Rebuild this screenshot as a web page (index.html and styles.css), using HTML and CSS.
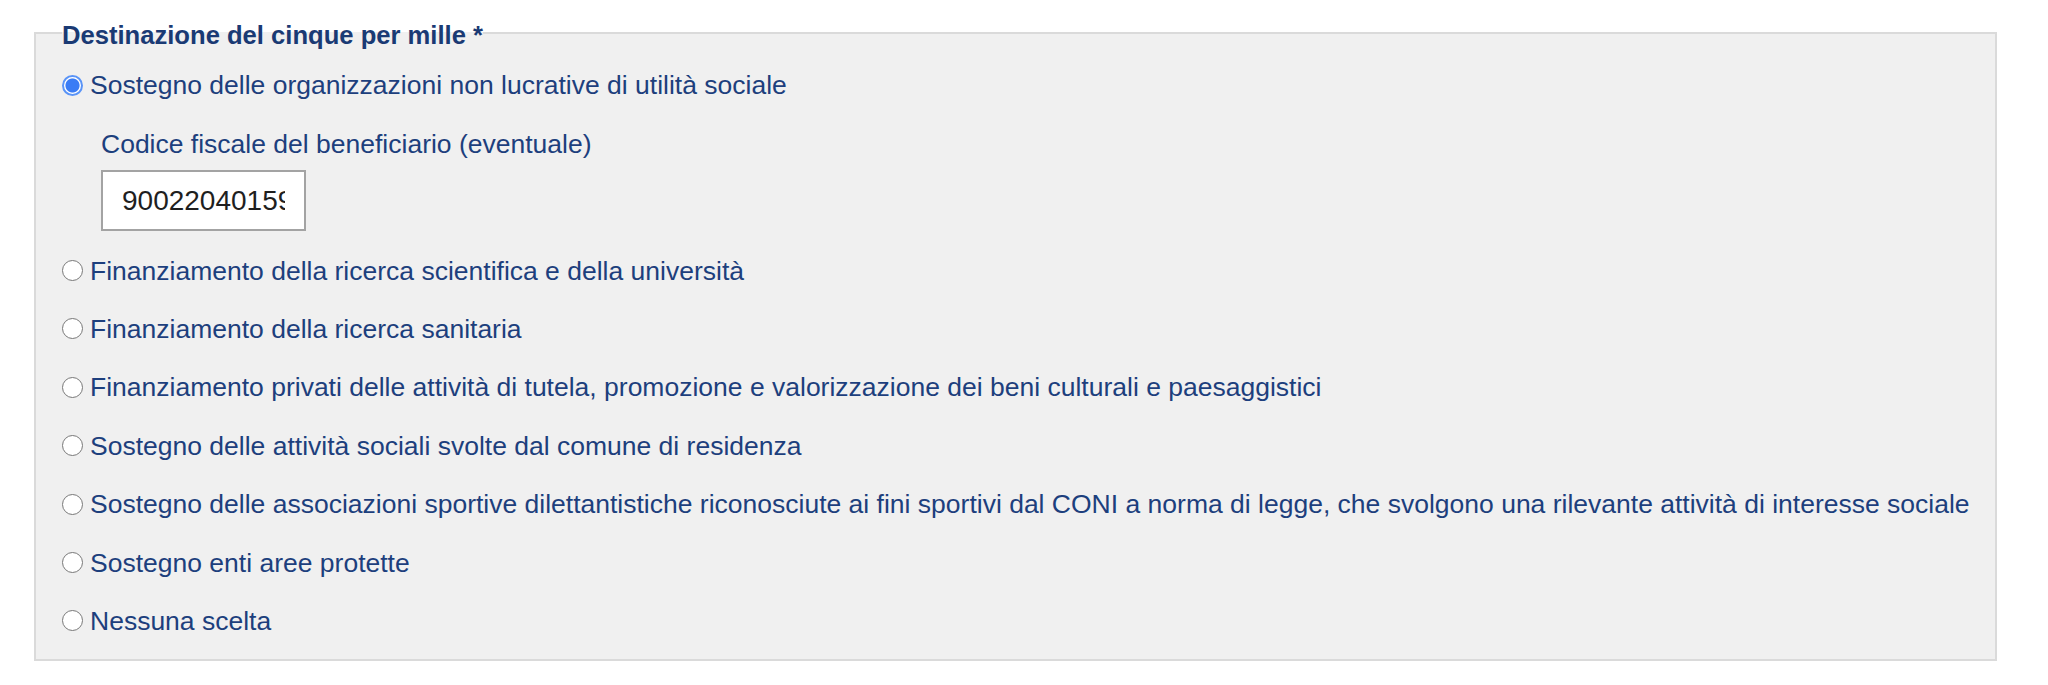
FILE: index.html
```html
<!DOCTYPE html>
<html lang="it">
<head>
<meta charset="utf-8">
<title>Destinazione del cinque per mille</title>
<link rel="stylesheet" href="styles.css">
</head>
<body>
<form class="page">
  <fieldset class="group">
    <legend class="group-title">Destinazione del cinque per mille *</legend>
    <label class="option"><input class="radio" type="radio" name="dest" checked><span>Sostegno delle organizzazioni non lucrative di utilità sociale</span></label>
    <div class="sub">
      <label class="sub-label" for="cf">Codice fiscale del beneficiario (eventuale)</label>
      <input class="text-input" id="cf" type="text" value="90022040159">
    </div>
    <label class="option"><input class="radio" type="radio" name="dest"><span>Finanziamento della ricerca scientifica e della università</span></label>
    <label class="option"><input class="radio" type="radio" name="dest"><span>Finanziamento della ricerca sanitaria</span></label>
    <label class="option"><input class="radio" type="radio" name="dest"><span>Finanziamento privati delle attività di tutela, promozione e valorizzazione dei beni culturali e paesaggistici</span></label>
    <label class="option"><input class="radio" type="radio" name="dest"><span>Sostegno delle attività sociali svolte dal comune di residenza</span></label>
    <label class="option"><input class="radio" type="radio" name="dest"><span>Sostegno delle associazioni sportive dilettantistiche riconosciute ai fini sportivi dal CONI a norma di legge, che svolgono una rilevante attività di interesse sociale</span></label>
    <label class="option"><input class="radio" type="radio" name="dest"><span>Sostegno enti aree protette</span></label>
    <label class="option"><input class="radio" type="radio" name="dest"><span>Nessuna scelta</span></label>
  </fieldset>
</form>
</body>
</html>
```

FILE: styles.css
```css
html, body {
  margin: 0;
  padding: 0;
  background: #ffffff;
}
body {
  font-family: "Liberation Sans", Arial, sans-serif;
  font-size: 26.5px;
  color: #1d3f7d;
}
.page {
  padding-top: 16px;
}
.group {
  margin: 0 51px 0 34px;
  border: 2px solid #dadada;
  background: #f0f0f0;
  padding: 6px 0 9px 26px;
  min-width: 0;
}
.group-title {
  padding: 4px 0 0 0;
  margin: 0;
  font-weight: bold;
  font-size: 25.6px;
  line-height: 30px;
  color: #1a3a74;
}
.option {
  display: flex;
  align-items: center;
  gap: 7px;
  height: 58.4px;
  line-height: 30px;
  white-space: nowrap;
}
.radio {
  appearance: none;
  -webkit-appearance: none;
  margin: 0;
  flex: 0 0 auto;
  width: 21px;
  height: 21px;
  border-radius: 50%;
  border: 1.7px solid #787878;
  background: #ffffff;
  box-sizing: border-box;
}
.radio:checked {
  border: 2px solid #5a94f7;
  background: radial-gradient(circle, #3a7cf5 0, #3a7cf5 6.6px, #ffffff 7.5px);
}
.sub {
  display: flex;
  flex-direction: column;
  align-items: flex-start;
  gap: 11px;
  padding: 15px 0 10px 39px;
}
.sub-label {
  line-height: 30px;
}
.text-input {
  box-sizing: border-box;
  width: 205px;
  height: 61px;
  margin: 0;
  padding: 0 19px;
  border: 2px solid #a3a3a3;
  border-radius: 0;
  background: #ffffff;
  font-family: "Liberation Sans", Arial, sans-serif;
  font-size: 28px;
  color: #1f1f1f;
  outline: none;
}
```
